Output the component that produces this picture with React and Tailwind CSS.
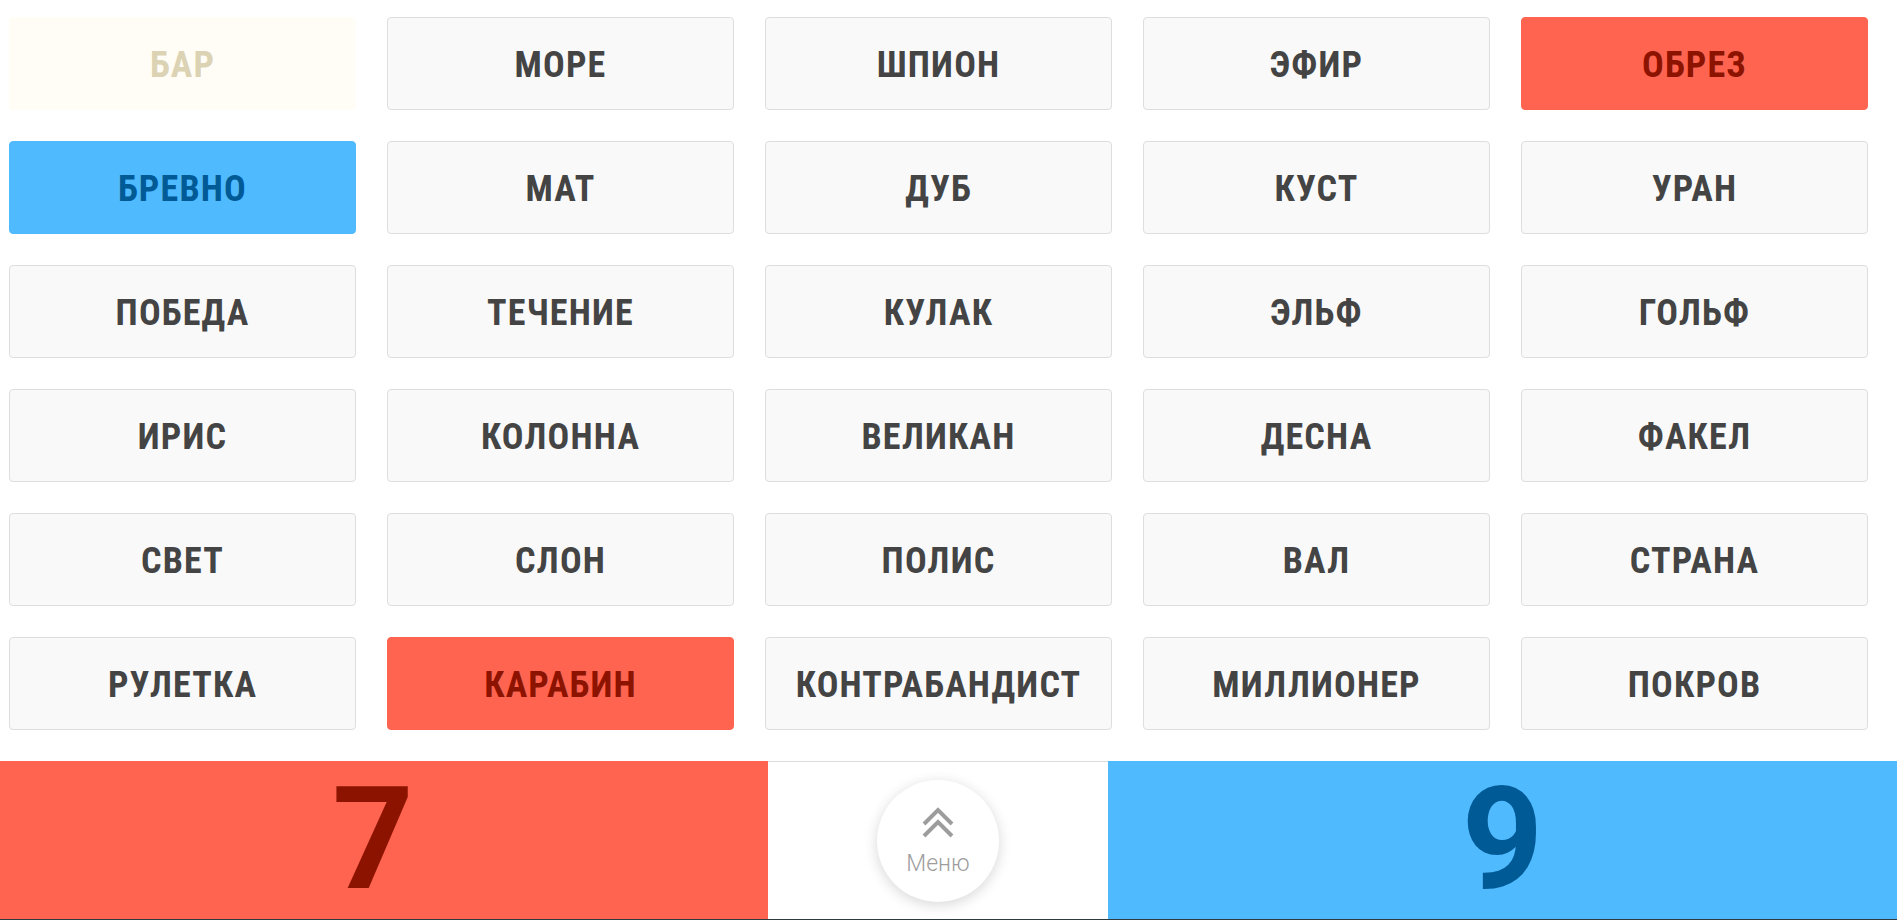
import React from "react";

const WORDS = [
  { text: "БАР", kind: "neutral" },
  { text: "МОРЕ" },
  { text: "ШПИОН" },
  { text: "ЭФИР" },
  { text: "ОБРЕЗ", kind: "red" },
  { text: "БРЕВНО", kind: "blue" },
  { text: "МАТ" },
  { text: "ДУБ" },
  { text: "КУСТ" },
  { text: "УРАН" },
  { text: "ПОБЕДА" },
  { text: "ТЕЧЕНИЕ" },
  { text: "КУЛАК" },
  { text: "ЭЛЬФ" },
  { text: "ГОЛЬФ" },
  { text: "ИРИС" },
  { text: "КОЛОННА" },
  { text: "ВЕЛИКАН" },
  { text: "ДЕСНА" },
  { text: "ФАКЕЛ" },
  { text: "СВЕТ" },
  { text: "СЛОН" },
  { text: "ПОЛИС" },
  { text: "ВАЛ" },
  { text: "СТРАНА" },
  { text: "РУЛЕТКА" },
  { text: "КАРАБИН", kind: "red" },
  { text: "КОНТРАБАНДИСТ" },
  { text: "МИЛЛИОНЕР" },
  { text: "ПОКРОВ" },
];

const CARD_STYLES = {
  neutral: "bg-[#fffdf6] border-[#fffdf6] text-[#dcd3b4]",
  red: "bg-[#ff6450] border-[#ff6450] text-[#8c1300]",
  blue: "bg-[#50baff] border-[#50baff] text-[#005a96]",
  default: "bg-[#f9f9f9] border-[#dedede] text-[#444444]",
};

function WordCard({ text, kind }) {
  const style = CARD_STYLES[kind] || CARD_STYLES.default;
  return (
    <div
      className={`h-[93px] rounded-[4px] border flex items-center justify-center pt-[5px] ${style}`}
    >
      <span className="font-['Roboto',sans-serif] font-bold text-[36px] leading-[1.2] tracking-[1.2px] [font-stretch:86%]">
        {text}
      </span>
    </div>
  );
}

function ChevronsUp() {
  return (
    <svg width="32" height="32" viewBox="0 0 32 32" fill="none">
      <polyline points="2,18 16,4 30,18" stroke="#9d9d9d" strokeWidth="4" />
      <polyline points="2,30 16,16 30,30" stroke="#9d9d9d" strokeWidth="4" />
    </svg>
  );
}

export default function App() {
  return (
    <div className="w-[1897px] h-[921px] bg-white flex flex-col overflow-hidden">
      {/* игровое поле */}
      <div className="grid grid-cols-[repeat(5,347px)] gap-x-[31px] gap-y-[31px] pl-[9px] pt-[17px]">
        {WORDS.map((w) => (
          <WordCard key={w.text} text={w.text} kind={w.kind} />
        ))}
      </div>

      {/* счёт и меню */}
      <div className="mt-[31px] h-[158px] flex">
        <div className="w-[768px] bg-[#ff6450] flex items-center justify-center">
          <span className="font-['Roboto',sans-serif] font-bold text-[142px] leading-[1.1] text-[#8c1300] [font-stretch:92%] pr-[22px]">
            7
          </span>
        </div>
        <div className="w-[340px] bg-white border-t border-[#dddddd] flex items-center justify-center">
          <button className="w-[122px] h-[122px] rounded-full bg-white shadow-[0_3px_14px_rgba(0,0,0,0.16)] flex flex-col items-center pt-[26px]">
            <ChevronsUp />
            <span className="mt-[14px] font-['Roboto',sans-serif] font-light text-[23px] leading-none text-[#9d9d9d]">
              Меню
            </span>
          </button>
        </div>
        <div className="flex-1 bg-[#50baff] flex items-center justify-center">
          <span className="font-['Roboto',sans-serif] font-bold text-[142px] leading-[1.1] text-[#005a96] [font-stretch:92%]">
            9
          </span>
        </div>
      </div>
      <div className="h-[1px] bg-[#2f3a40]" />
    </div>
  );
}
